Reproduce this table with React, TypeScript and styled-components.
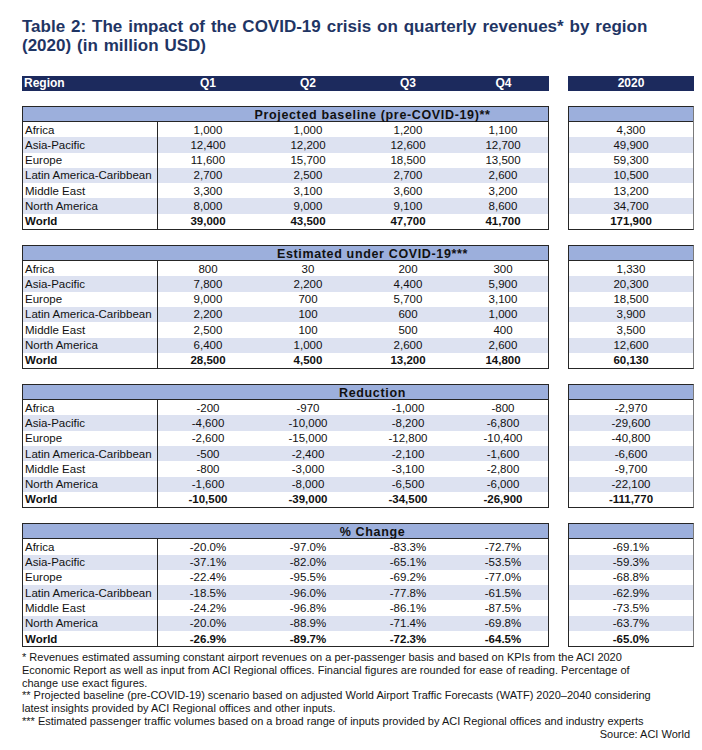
import React from "react";
import styled, { createGlobalStyle } from "styled-components";

const Global = createGlobalStyle`
  html, body { margin: 0; padding: 0; background: #fff; }
  body { font-family: "Liberation Sans", Arial, sans-serif; color: #111; }
`;

const Page = styled.div`
  width: 672px;
  padding: 17px 0 0 22px;
`;

const Title = styled.h1`
  margin: 0;
  font-size: 17px;
  line-height: 19px;
  font-weight: 700;
  word-spacing: 1.2px;
  color: #1f3564;
  width: 680px;
`;

const Layout = styled.div`
  display: grid;
  grid-template-columns: 527px 126px;
  column-gap: 19px;
  row-gap: 15px;
  margin-top: 21px;
`;

const HeadBar = styled.div<{ $cols: string }>`
  display: grid;
  grid-template-columns: ${(p) => p.$cols};
  height: 15px;
  background: #1c2a5d;
  color: #fff;
  font-weight: 700;
  font-size: 12px;
  line-height: 15px;
  box-sizing: border-box;
`;

const HeadCell = styled.div<{ $left?: boolean }>`
  text-align: ${(p) => (p.$left ? "left" : "center")};
  padding-left: ${(p) => (p.$left ? "2px" : "0")};
`;

const Box = styled.div<{ $right?: boolean }>`
  border: 1px solid #262626;
  border-right-color: ${(p) => (p.$right ? "#7a7a7a" : "#262626")};
  box-sizing: border-box;
`;

const SectionHead = styled.div<{ $pad?: number }>`
  height: 15px;
  box-sizing: border-box;
  background: #9cafdc;
  border-bottom: 1px solid #262626;
  font-weight: 700;
  font-size: 12.5px;
  letter-spacing: 0.65px;
  line-height: 14px;
  padding-top: 1px;
  text-align: center;
  padding-left: ${(p) => p.$pad ?? 0}px;
  color: #111;
  white-space: nowrap;
`;

const Row = styled.div<{ $cols: string; $alt: boolean; $bold: boolean }>`
  display: grid;
  grid-template-columns: ${(p) => p.$cols};
  height: 15.3px;
  box-sizing: border-box;
  padding-top: 1.5px;
  line-height: 13.8px;
  font-size: 11.5px;
  background: ${(p) => (p.$alt ? "#dde2f1" : "#fff")};
  font-weight: ${(p) => (p.$bold ? 700 : 400)};
`;

const RegionCell = styled.div`
  border-right: 1px solid #262626;
  margin-top: -1.5px;
  padding-top: 1.5px;
  padding-left: 2px;
  white-space: nowrap;
`;

const Num = styled.div`
  text-align: center;
  white-space: nowrap;
`;

const Notes = styled.div`
  margin-top: 4px;
  width: 672px;
  font-size: 11px;
  line-height: 12.7px;
  color: #151515;
`;

const Source = styled.div`
  text-align: right;
  padding-right: 4px;
`;

const MAIN_COLS = "135px 100px 100px 100px 1fr";
const HEAD_COLS = "136px 100px 100px 100px 1fr";

const regions = [
  "Africa",
  "Asia-Pacific",
  "Europe",
  "Latin America-Caribbean",
  "Middle East",
  "North America",
  "World",
];

type Section = { title: string; rows: string[][] };

const sections: Section[] = [
  {
    title: "Projected baseline (pre-COVID-19)**",
    rows: [
      ["1,000", "1,000", "1,200", "1,100", "4,300"],
      ["12,400", "12,200", "12,600", "12,700", "49,900"],
      ["11,600", "15,700", "18,500", "13,500", "59,300"],
      ["2,700", "2,500", "2,700", "2,600", "10,500"],
      ["3,300", "3,100", "3,600", "3,200", "13,200"],
      ["8,000", "9,000", "9,100", "8,600", "34,700"],
      ["39,000", "43,500", "47,700", "41,700", "171,900"],
    ],
  },
  {
    title: "Estimated under COVID-19***",
    rows: [
      ["800", "30", "200", "300", "1,330"],
      ["7,800", "2,200", "4,400", "5,900", "20,300"],
      ["9,000", "700", "5,700", "3,100", "18,500"],
      ["2,200", "100", "600", "1,000", "3,900"],
      ["2,500", "100", "500", "400", "3,500"],
      ["6,400", "1,000", "2,600", "2,600", "12,600"],
      ["28,500", "4,500", "13,200", "14,800", "60,130"],
    ],
  },
  {
    title: "Reduction",
    rows: [
      ["-200", "-970", "-1,000", "-800", "-2,970"],
      ["-4,600", "-10,000", "-8,200", "-6,800", "-29,600"],
      ["-2,600", "-15,000", "-12,800", "-10,400", "-40,800"],
      ["-500", "-2,400", "-2,100", "-1,600", "-6,600"],
      ["-800", "-3,000", "-3,100", "-2,800", "-9,700"],
      ["-1,600", "-8,000", "-6,500", "-6,000", "-22,100"],
      ["-10,500", "-39,000", "-34,500", "-26,900", "-111,770"],
    ],
  },
  {
    title: "% Change",
    rows: [
      ["-20.0%", "-97.0%", "-83.3%", "-72.7%", "-69.1%"],
      ["-37.1%", "-82.0%", "-65.1%", "-53.5%", "-59.3%"],
      ["-22.4%", "-95.5%", "-69.2%", "-77.0%", "-68.8%"],
      ["-18.5%", "-96.0%", "-77.8%", "-61.5%", "-62.9%"],
      ["-24.2%", "-96.8%", "-86.1%", "-87.5%", "-73.5%"],
      ["-20.0%", "-88.9%", "-71.4%", "-69.8%", "-63.7%"],
      ["-26.9%", "-89.7%", "-72.3%", "-64.5%", "-65.0%"],
    ],
  },
];

export default function App() {
  return (
    <Page>
      <Global />
      <Title>
        Table 2: The impact of the COVID-19 crisis on quarterly revenues* by region
        <br />
        (2020) (in million USD)
      </Title>
      <Layout>
        <HeadBar $cols={HEAD_COLS}>
          <HeadCell $left>Region</HeadCell>
          <HeadCell>Q1</HeadCell>
          <HeadCell>Q2</HeadCell>
          <HeadCell>Q3</HeadCell>
          <HeadCell>Q4</HeadCell>
        </HeadBar>
        <HeadBar $cols="1fr">
          <HeadCell>2020</HeadCell>
        </HeadBar>
        {sections.map((s) => (
          <React.Fragment key={s.title}>
            <Box>
              <SectionHead $pad={174}>{s.title}</SectionHead>
              {s.rows.map((r, i) => (
                <Row key={i} $cols={MAIN_COLS} $alt={i % 2 === 1} $bold={i === 6}>
                  <RegionCell>{regions[i]}</RegionCell>
                  {r.slice(0, 4).map((v, j) => (
                    <Num key={j}>{v}</Num>
                  ))}
                </Row>
              ))}
            </Box>
            <Box $right>
              <SectionHead />
              {s.rows.map((r, i) => (
                <Row key={i} $cols="1fr" $alt={i % 2 === 1} $bold={i === 6}>
                  <Num>{r[4]}</Num>
                </Row>
              ))}
            </Box>
          </React.Fragment>
        ))}
      </Layout>
      <Notes>
        * Revenues estimated assuming constant airport revenues on a per-passenger basis and based on KPIs from the ACI 2020
        <br />
        Economic Report as well as input from ACI Regional offices. Financial figures are rounded for ease of reading. Percentage of
        <br />
        change use exact figures.
        <br />
        ** Projected baseline (pre-COVID-19) scenario based on adjusted World Airport Traffic Forecasts (WATF) 2020–2040 considering
        <br />
        latest insights provided by ACI Regional offices and other inputs.
        <br />
        *** Estimated passenger traffic volumes based on a broad range of inputs provided by ACI Regional offices and industry experts
        <Source>Source: ACI World</Source>
      </Notes>
    </Page>
  );
}
